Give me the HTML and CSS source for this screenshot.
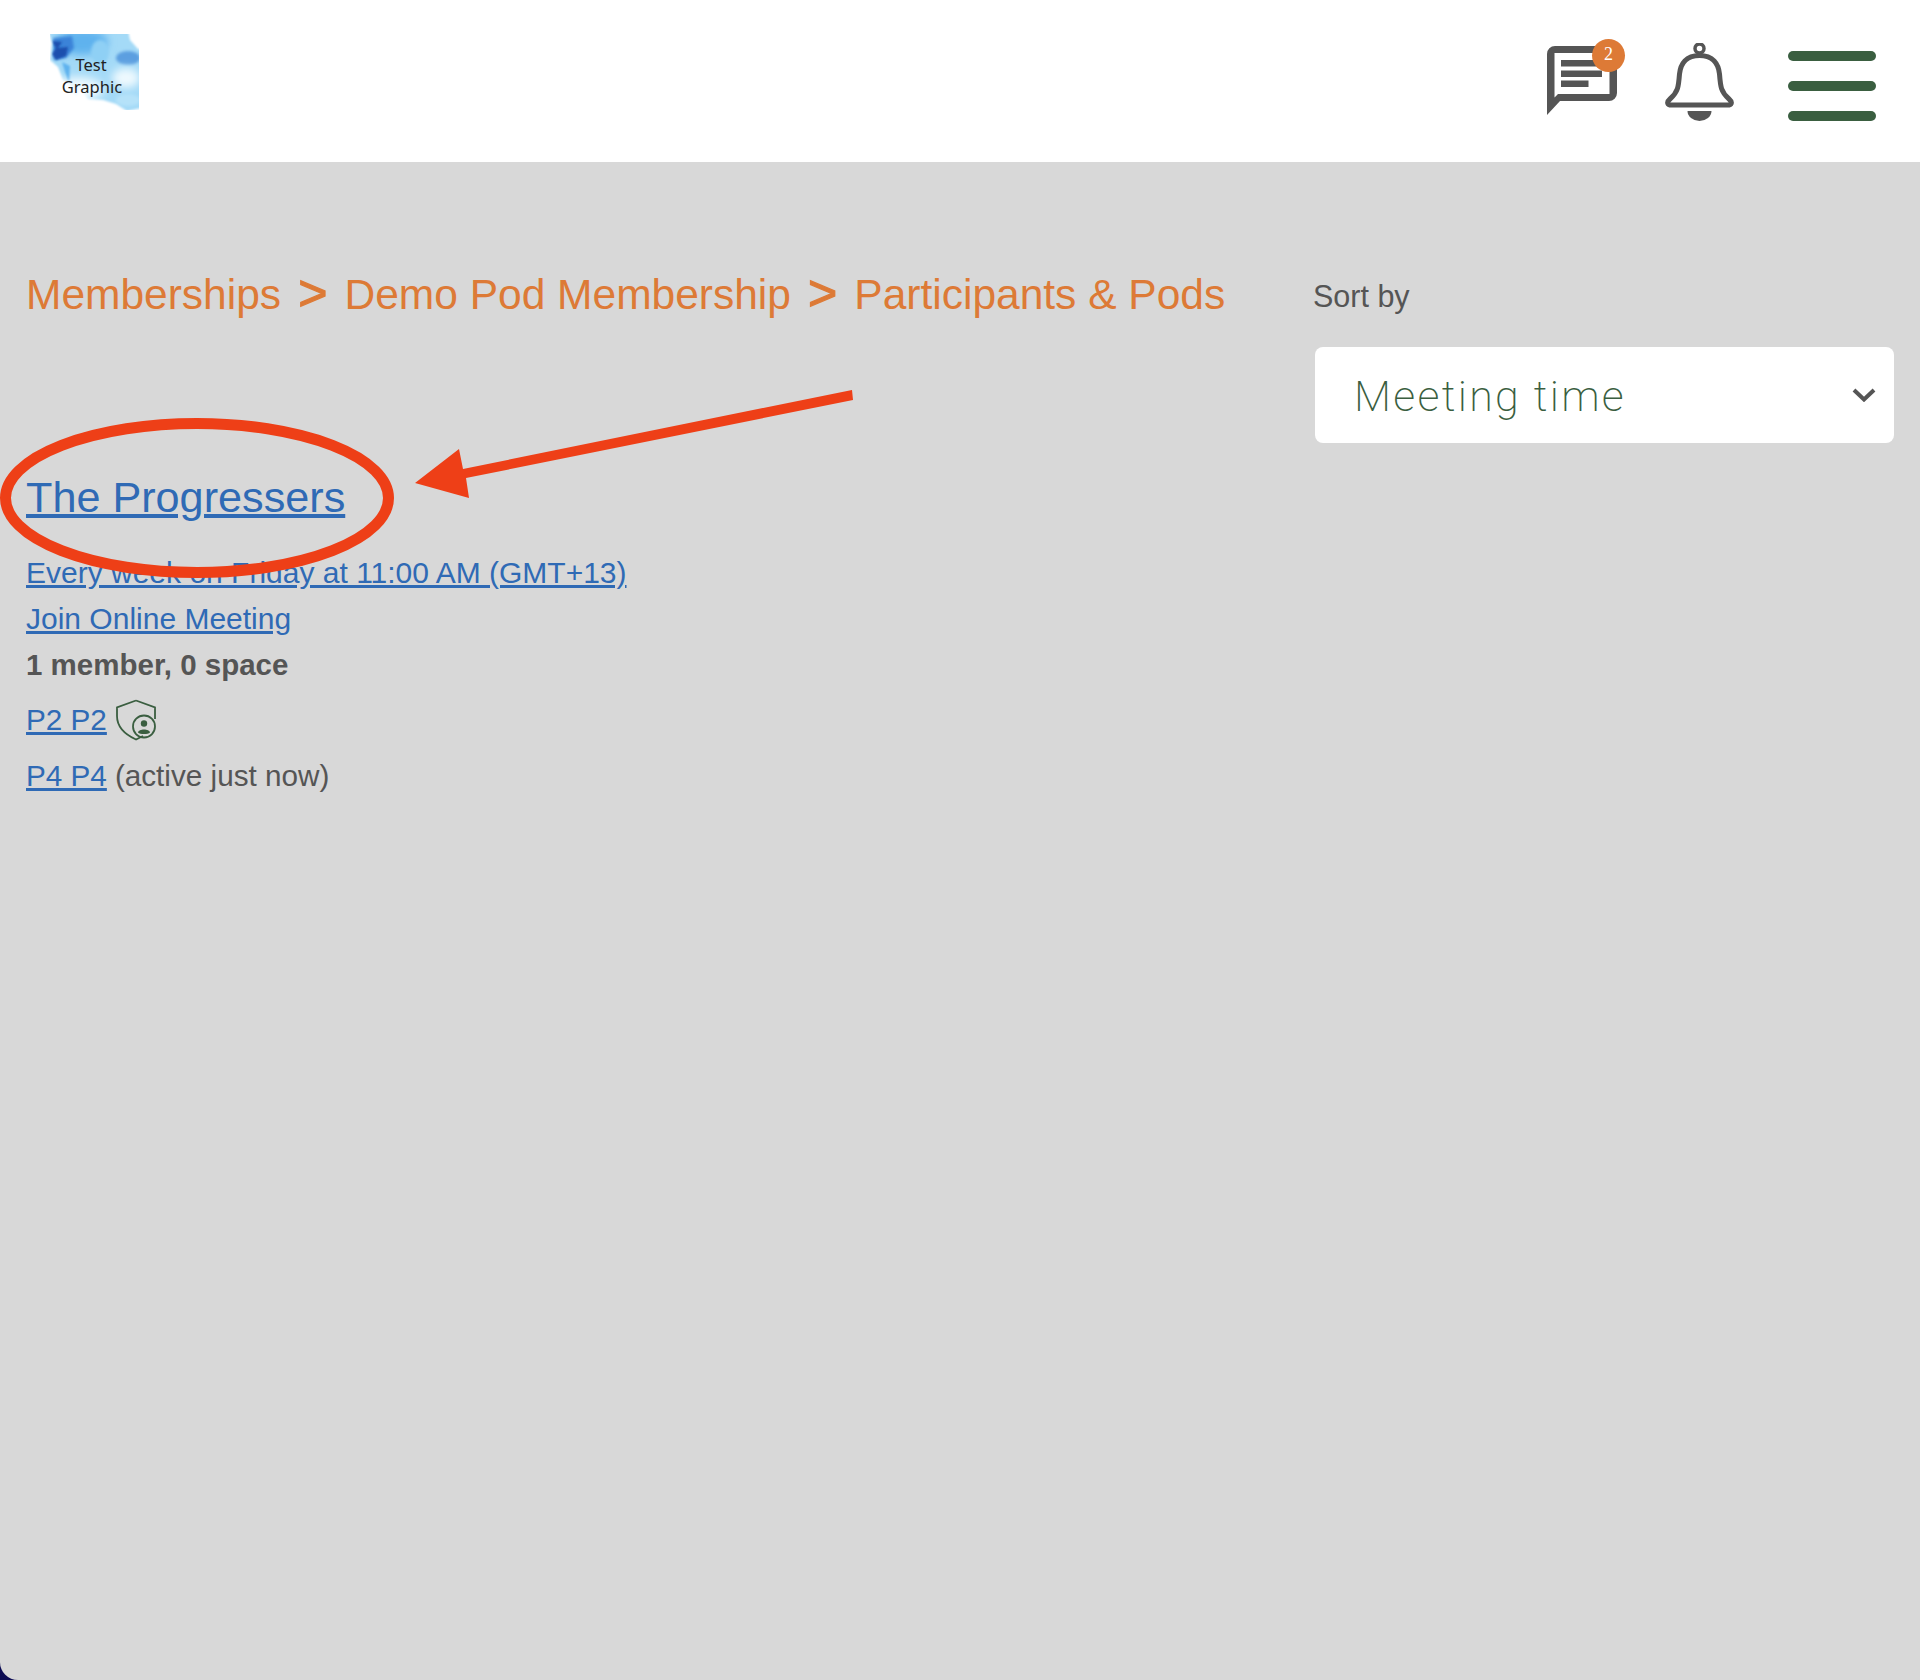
FILE: index.html
```html
<!DOCTYPE html>
<html lang="en">
<head>
<meta charset="utf-8">
<title>Participants &amp; Pods</title>
<link rel="stylesheet" href="styles.css">
</head>
<body>
<div class="page">
  <header class="topbar">
    <a class="logo" href="#">
      <svg width="89" height="76" viewBox="0 0 89 76">
        <defs>
          <filter id="b4" x="-50%" y="-50%" width="200%" height="200%"><feGaussianBlur stdDeviation="4"/></filter>
          <filter id="b2" x="-50%" y="-50%" width="200%" height="200%"><feGaussianBlur stdDeviation="1.800"/></filter>
          <filter id="b1" x="-30%" y="-30%" width="160%" height="160%"><feGaussianBlur stdDeviation="0.800"/></filter>
          <clipPath id="box"><path d="M0 0H89V76H0Z"/></clipPath>
          <mask id="shape">
            <path class="mask-fill" filter="url(#b1)" d="M-2 -4H78L80 6L88 15L92 16V74L77 77L66 70L53 66L38 65L30 53L26 62L20 50L13 46L8 33L0 26L2 9Z"/>
          </mask>
        </defs>
        <g clip-path="url(#box)">
          <g mask="url(#shape)">
            <rect class="w-base" x="-4" y="-4" width="97" height="84"/>
            <ellipse class="w-white" filter="url(#b4)" cx="28" cy="55" rx="26" ry="12"/>
            <ellipse class="w-mid" filter="url(#b4)" cx="32" cy="8" rx="26" ry="13"/>
            <ellipse class="w-pale" filter="url(#b2)" cx="50" cy="18" rx="9" ry="12"/>
            <ellipse class="w-mid2" filter="url(#b2)" cx="78" cy="24" rx="12" ry="7"/>
            <ellipse class="w-white" filter="url(#b4)" cx="76" cy="44" rx="14" ry="10"/>
            <ellipse class="w-sky" filter="url(#b2)" cx="78" cy="66" rx="12" ry="6"/>
            <path class="w-mid" filter="url(#b1)" d="M12 28L20 32L19 48L15 38Z"/>
            <path class="w-deep2" filter="url(#b2)" d="M3 4L22 2L24 14L16 24L4 26Z"/>
            <path class="w-deep" filter="url(#b1)" d="M2 7L12 8L8 14L18 13L16 22L6 26L2 20L6 14Z"/>
          </g>
          <text class="logo-text" x="41" y="37" text-anchor="middle">Test</text>
          <text class="logo-text" x="42" y="59" text-anchor="middle">Graphic</text>
        </g>
      </svg>
    </a>
    <nav class="tools">
      <a class="chat" href="#">
        <svg width="70" height="71" viewBox="0 0 70 71">
          <path class="ink" fill-rule="evenodd" d="M8 1H62a8 8 0 0 1 8 8V48a8 8 0 0 1-8 8H13L0 70V9a8 8 0 0 1 8-8ZM7.500 8V52.500L11 49H62.500V8Z"/>
          <path class="ink" d="M14 15H56V21.500H14ZM14 25.500H55V32H14ZM14 35.500H41.500V42H14Z"/>
        </svg>
        <span class="badge">2</span>
      </a>
      <a class="bell" href="#">
        <svg width="70" height="78" viewBox="0 0 70 78">
          <circle class="ink-thin" cx="34.500" cy="5.500" r="4.500"/>
          <path class="ink-line" d="M34.500 12.500C21 12.500 15.500 21 14.500 31C13.500 44 13 49 5 56C1 59.500 2.500 62 6.500 62H62.500C66.500 62 68 59.500 64 56C56 49 55.500 44 54.500 31C53.500 21 48 12.500 34.500 12.500Z"/>
          <path class="ink" d="M22.500 68H46.500A12 10 0 0 1 22.500 68Z"/>
        </svg>
      </a>
      <button class="burger" type="button" aria-label="Menu"><span></span><span></span><span></span></button>
    </nav>
  </header>

  <main class="content">
    <section class="pods">
      <h1 class="crumbs">
        <a href="#">Memberships</a><span class="sep">&gt;</span><a href="#">Demo Pod Membership</a><span class="sep">&gt;</span><a href="#">Participants &amp; Pods</a>
      </h1>
      <article class="pod">
        <h2 class="pod-title"><a href="#">The Progressers</a></h2>
        <p class="line"><a href="#">Every week on Friday at 11:00 AM (GMT+13)</a></p>
        <p class="line"><a href="#">Join Online Meeting</a></p>
        <p class="line strong">1 member, 0 space</p>
        <p class="line person first"><a href="#">P2 P2</a>
          <svg class="shield" width="42" height="42" viewBox="0 0 42 42">
            <path class="shield-line" d="M21 1.500L40 8.500V20M28 37L21 40.500C9 35 2 27 2 17V8.500L21 1.500"/>
            <circle class="shield-line" cx="29" cy="27.500" r="11"/>
            <circle class="shield-fill" cx="29" cy="24.500" r="3.200"/>
            <path class="shield-fill" d="M23 33.500C23.500 29.500 34.500 29.500 35 33.500C33 35.500 25 35.500 23 33.500Z"/>
          </svg>
        </p>
        <p class="line person"><a href="#">P4 P4</a> (active just now)</p>
      </article>
    </section>
    <aside class="sort">
      <label class="sort-label" for="sort">Sort by</label>
      <div class="select-wrap">
        <select class="select" id="sort"><option>Meeting time</option></select>
        <svg class="chev" width="24" height="14" viewBox="0 0 24 14"><path d="M2 2L12 11.500L22 2"/></svg>
      </div>
    </aside>
  </main>

  <svg class="annotation" width="860" height="170" viewBox="0 0 860 170">
    <ellipse cx="197" cy="90" rx="191.500" ry="74.500"/>
    <path class="arrow" d="M852 -18L853 -8L466 70L469 90L415 75L459 41L463 61Z"/>
  </svg>
</div>
</body>
</html>
```

FILE: styles.css
```css
* { box-sizing: border-box; }
html, body { margin: 0; background: #0b0a52; }
body { font-family: "Liberation Sans", Arial, sans-serif; color: #555; }
.page {
  position: relative;
  width: 1920px;
  height: 1680px;
  display: flex;
  flex-direction: column;
  background: #d8d8d8;
  border-bottom-left-radius: 18px;
  overflow: hidden;
}
a { color: #2f6ab5; text-decoration-thickness: 3px; }

.topbar {
  height: 162px;
  flex: none;
  background: #fff;
  display: flex;
  justify-content: space-between;
  padding: 34px 44px 0 50px;
}
.logo { display: block; height: 76px; }
.logo svg { display: block; }
.mask-fill { fill: #fff; }
.w-base { fill: #a4daf7; }
.w-white { fill: #eef9fe; }
.w-mid { fill: #5fb2ee; }
.w-mid2 { fill: #5b9fe0; }
.w-pale { fill: #8fd0f5; }
.w-sky { fill: #b5e2f9; }
.w-deep { fill: #1c4fae; }
.w-deep2 { fill: #3a83d8; }
.logo-text { font-family: "Noto Sans", sans-serif; font-size: 16.500px; fill: #222; }

.tools { display: flex; align-items: flex-start; }
.chat { position: relative; display: block; margin-top: 11px; width: 70px; height: 71px; }
.chat svg, .bell svg { display: block; }
.ink { fill: #555; }
.ink-line { fill: none; stroke: #555; stroke-width: 5; }
.ink-thin { fill: none; stroke: #555; stroke-width: 3.500; }
.badge {
  position: absolute;
  left: 45px;
  top: -6px;
  width: 33px;
  height: 33px;
  border-radius: 50%;
  background: #dd7a36;
  color: #fff;
  font: 18px/31px "Liberation Serif", serif;
  text-align: center;
}
.bell { display: block; margin: 9px 0 0 48px; }
.burger {
  margin: 17px 0 0 53px;
  width: 88px;
  height: 70px;
  padding: 0;
  border: 0;
  background: none;
  display: flex;
  flex-direction: column;
  justify-content: space-between;
}
.burger span { display: block; height: 10px; border-radius: 5px; background: #3a5e40; }

.content { flex: 1; display: flex; justify-content: space-between; padding: 109px 25px 0 26px; }
.crumbs { margin: 0; font-size: 42.500px; font-weight: 400; line-height: 48px; white-space: nowrap; }
.crumbs a { color: #dd7a36; text-decoration: none; }
.sep {
  color: #dd7a36;
  margin: 0 17.100px;
  font-size: 50px;
  line-height: 0;
  vertical-align: -1px;
  -webkit-text-stroke: 1.200px #dd7a36;
}
.pod { margin-top: 152px; }
.pod-title { margin: 0 0 27px; font-size: 43.200px; font-weight: 400; line-height: 52px; }
.pod-title a { text-decoration-thickness: 4px; }
.line { margin: 0; font-size: 30px; line-height: 46px; }
.strong { font-size: 29.500px; font-weight: 700; }
.person { display: flex; align-items: center; gap: 8px; margin-top: 7px; font-size: 29.700px; }
.person.first { height: 54px; margin-top: 5px; }
.person.first + .person { margin-top: 6px; }
.shield { display: block; }
.shield-line { fill: none; stroke: #3a5e40; stroke-width: 1.800; }
.shield-fill { fill: #3a5e40; }

.sort { width: 582px; flex: none; }
.sort-label { display: block; font-size: 30.500px; line-height: 40px; margin-top: 5px; }
.select-wrap { position: relative; margin: 31px 0 0 2px; }
.select {
  display: block;
  width: 579px;
  height: 96px;
  padding: 2px 60px 0 39px;
  border: 0;
  border-radius: 8px;
  background: #fff;
  appearance: none;
  font-family: Roboto, sans-serif;
  font-weight: 200;
  font-size: 43px;
  letter-spacing: 2.300px;
  color: #3a5e40;
}
.chev { position: absolute; right: 19px; top: 41px; fill: none; stroke: #555; stroke-width: 4; }

.annotation { position: absolute; left: 0; top: 408px; overflow: visible; pointer-events: none; }
.annotation ellipse { fill: none; stroke: #ee3f17; stroke-width: 11; }
.annotation .arrow { fill: #ee3f17; }
```
